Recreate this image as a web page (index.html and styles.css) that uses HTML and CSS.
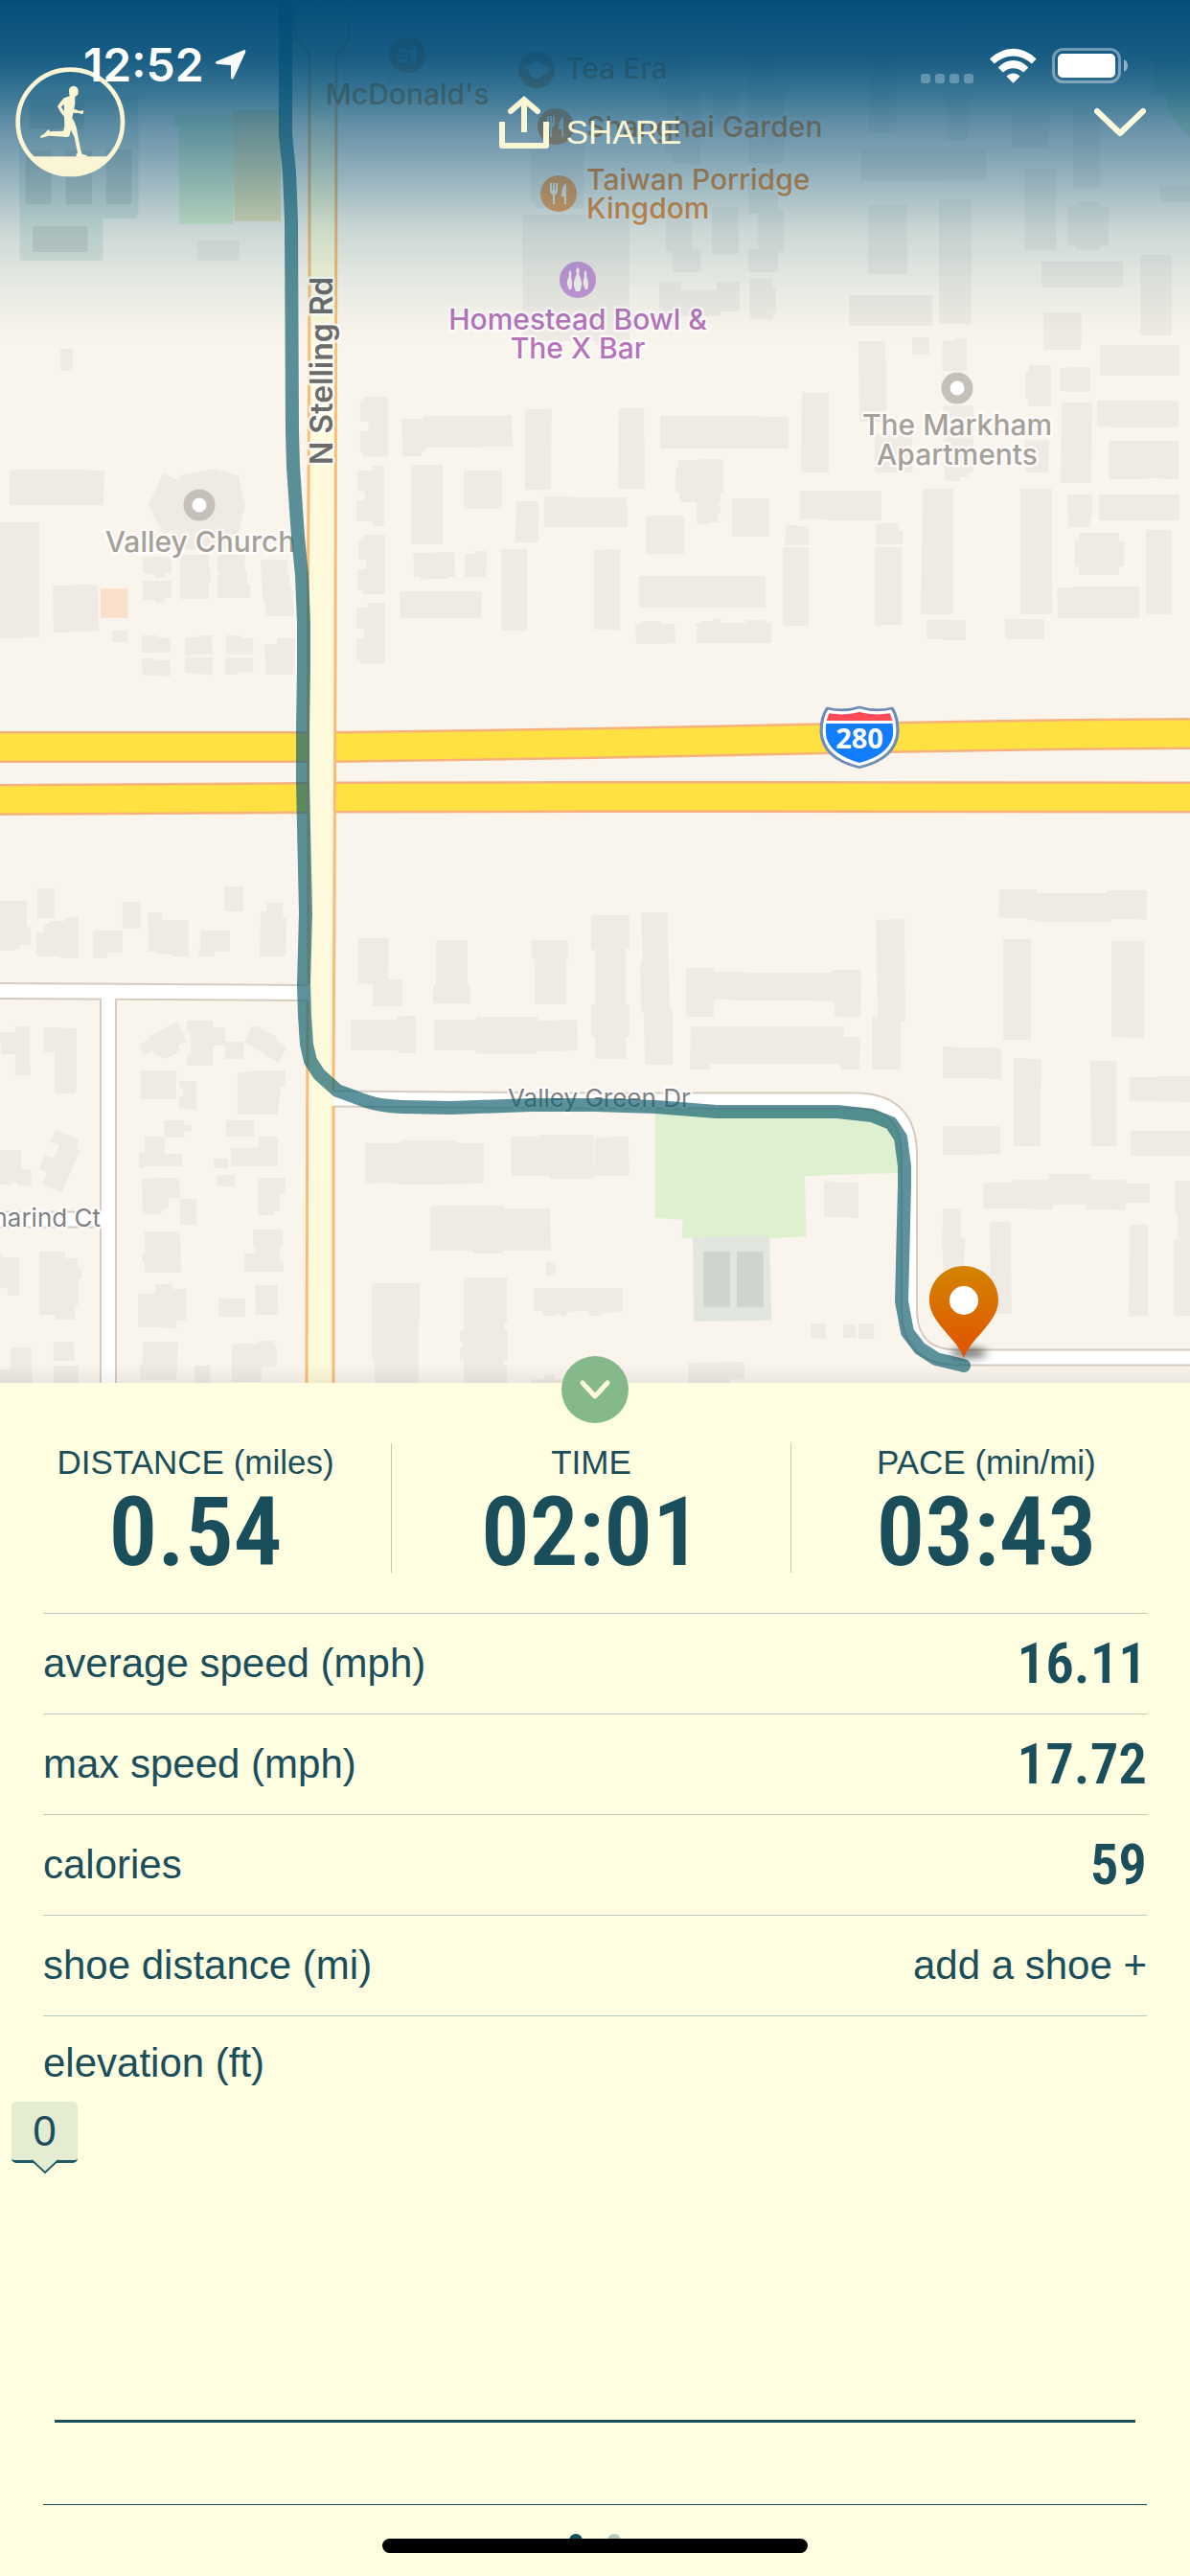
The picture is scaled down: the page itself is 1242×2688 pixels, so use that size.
FILE: index.html
```html
<!DOCTYPE html>
<html lang="en">
<head>
<meta charset="utf-8">
<meta name="viewport" content="width=device-width, initial-scale=1">
<title>Run summary</title>
<link rel="stylesheet" href="styles.css">
</head>
<body>
<main class="screen">
  <section class="map" aria-label="Route map">
    <svg class="map-canvas" viewBox="0 0 1242 1443" role="img" aria-label="Map of the run along N Stelling Rd and Valley Green Dr">
      <defs>
        <linearGradient id="pin-fill" x1="0" y1="0" x2="0" y2="1">
          <stop offset="0" stop-color="#d38400"/>
          <stop offset="1" stop-color="#e15200"/>
        </linearGradient>
        <filter id="soft" x="-50%" y="-100%" width="200%" height="300%"><feGaussianBlur stdDeviation="12"/></filter>
      </defs>

      <!-- parks and school grounds -->
      <svg width="621" height="360" viewBox="0 0 1568 1080" preserveAspectRatio="none">
        <path class="park" d="M460 362H615V702H472V395H460Z"/>
        <path class="sand" d="M612 345H740V692H618Z"/>
        <path class="school" d="M50 300H365V665L358 684H271V815H52Z"/>
        <path class="court" d="M67 470H135V640H67ZM173 470H243V640H173ZM280 468H347V640H280ZM77 322H221V405H77ZM86 708H231V789H86Z"/>
      </svg>
      <svg x="621" width="621" height="360" viewBox="0 0 1568 1080" preserveAspectRatio="none">
        <path class="park" d="M1472 180L1568 170V432L1509 350V292H1472Z"/>
      </svg>
      <svg x="621" y="1100" width="621" height="343" viewBox="0 0 1568 1029" preserveAspectRatio="none">
        <path class="park" d="M158 150V513L231 518L229 577H460L557 571L553 382L640 377L810 372V250L740 160Z"/>
        <path class="school" d="M258 572L460 570L465 833L260 837Z"/>
        <path class="court" d="M286 618H356V791H286ZM374 618H444V791H374Z"/>
      </svg>

      <!-- buildings, one tile per map quadrant -->
      <g class="building">
        <svg width="621" height="360" viewBox="0 0 1568 1080" preserveAspectRatio="none">
          <path d="M518 753H631V815H518ZM1397 430H1538V650H1410V636H1397ZM1377 672H1568V1068H1377ZM1018 225H1115V262H1018Z"/>
        </svg>
        <svg x="621" width="621" height="360" viewBox="0 0 1568 1080" preserveAspectRatio="none">
          <path d="M187 120H250V280H278V512H203V480H187ZM308 270H378V400H308ZM404 120H470V270H497V512H404ZM404 540H482V657H497V788H482V852H404V780H430V668H404ZM0 672H91V1080H0ZM187 625H255V765L258 780H279V852H203V788H187ZM308 648H375L379 652V795H308ZM702 465H1030V563H925V567H702ZM722 140H793V413H722ZM925 300H985V437H925ZM1098 340H1197V461H1098ZM1260 335H1331V588H1260ZM1490 582H1568V633H1490ZM1134 530H1215V783H1131V577H1134ZM1245 645H1268V633H1331V645H1353V770H1331V783H1268V770H1245ZM720 642H823V858H720ZM906 625H992V1014H906ZM669 924H889V1020H669ZM1177 819H1391V899H1177ZM1437 798H1520V1050H1437ZM1182 978H1283V1080H1182ZM169 882H227V908H321V882H381V975H331V990H169ZM407 873H467V897H477V980H470V1001H410V980H407ZM694 1068H765V1080H694ZM836 1056H881V1080H836ZM917 1066H947V1060H980V1080H917Z"/>
        </svg>
        <svg y="360" width="621" height="400" viewBox="0 0 1568 1200" preserveAspectRatio="none">
          <path d="M159 12H192V81H159ZM25 390H237V393H275L273 501H25ZM0 555H104V914H74V917H0ZM139 753H192V750H258L260 896H180V899H141ZM430 402L468 423L478 407L565 387L628 408L646 500L628 592V640H430L448 592L468 578L430 592L391 500ZM376 663H452V716H434V728H408V720L376 715ZM376 738H452V792H434V806H408V797H376ZM475 657H550V700L555 702V745H550V795H475ZM573 657H645V706H651V750H659V792H573V718L582 714L573 708ZM687 672H757V710L750 713L763 716V755L770 770L775 849H699V803L692 800ZM295 894H336V930H295ZM374 909H414L416 915L449 918V963H374ZM487 915H524V909H558L560 968H530V971H487ZM596 909H634L636 918H667V968H596ZM697 936H730V918H778L773 1031H700ZM374 981H411V987H449V1037L376 1034ZM487 978H560V1034L524 1029L487 1025ZM593 978H667V1025H629V1031H593Z"/>
          <path d="M959 162H1023V350H957V336H949V270H971V240H949V177H959ZM982 378H1013V567H983V552H939V486H962V458H942V393H982ZM957 594H1015V780H957V766H942V702H965V672H945V608H957ZM967 807H1015V998H949V987H939V918H959V888H939V822H967ZM1059 231H1114V222H1328V219H1348L1351 318H1268V321H1121V332H1111V348H1060ZM1384 201H1442V198H1454L1451 453H1384ZM1083 375H1167V624H1083ZM1222 393H1323V513H1222ZM1361 489H1419V618H1357ZM1434 474H1505V477H1568V570H1434ZM1089 651H1144V648H1197L1199 726H1180V732L1108 735V725H1091ZM1225 654H1252V645H1283V666L1280 726H1225ZM1321 639H1389V894H1321ZM1053 771H1270L1268 855H1055ZM1565 640H1568V893H1565Z"/>
          <path fill="#fae0cb" d="M265 762H337V855H265Z"/>
        </svg>
        <svg x="621" y="360" width="621" height="400" viewBox="0 0 1568 1200" preserveAspectRatio="none">
          <path d="M0 477H83V510H86V570H0ZM63 198H129V303H131V450H61ZM172 222H439V225H510V324H172ZM545 147H561V150H616V399H543ZM694 0H765V50H768V240H697ZM836 0H881V30H836ZM915 0H980V81H915ZM917 190H997V400L982 402V414H962V426H922ZM737 280H836V399H737ZM1131 297H1197L1194 399H1134ZM1182 0H1280V15H1182ZM1331 0H1540V96H1331ZM1144 63H1202V192H1141V168H1134V84H1144ZM1225 72H1245V69H1305V147H1240V143H1225ZM1323 174H1538V258H1356V255H1323ZM1353 300H1538V420L1475 417L1408 420H1353ZM1230 180H1310L1308 432H1227ZM220 360H278V357H338V462H331V490L323 492L331 508V530L323 532V555H298V560H268V491H222V462H212V387H220ZM361 480H460V600H361ZM134 534H235V654H134ZM540 456H755V549H607V545H540ZM503 564H525V567H563V627H500ZM740 558H800V582H811V624H740ZM495 633H563V879H495ZM737 633H808V876H757V879H737ZM864 450H944V843H858ZM1121 450H1204V843H1121ZM1245 468H1310V540H1305V570H1247V530H1245ZM1328 468H1540V549H1328ZM1275 588H1381V615H1394V693H1381V720H1275V693H1265V615H1275ZM1452 579H1520V843H1452ZM1217 759H1260V756H1434V855H1220ZM874 861H977V923H919V921H874ZM1081 858H1184V921H1081ZM0 642H28V639H66V893H38V890H0ZM116 723H449V822H116ZM106 873H121V864H172V873H210L212 933H192V936H109ZM265 870H280V864H313V855H333V870H396V861H449V870H465V933H268V882H265Z"/>
        </svg>
        <svg y="760" width="621" height="340" viewBox="0 0 1568 1020" preserveAspectRatio="none">
          <path d="M0 540H71V621H81V678H53V690H40V696H0ZM98 501H144V591L138 594H98ZM96 639H114V612H127V603H172V594L207 591V720H158V714H96ZM323 543H371V627H323ZM245 633H323V702H283V720H245ZM389 576H427V600H497V714H454V708L417 704V699H391V640ZM591 495H641V573H600V570H591ZM528 633H606V699H566V714H523V693H528ZM702 546H745V592L755 595L752 714H684L687 573H702ZM944 657H1025L1023 786H1060V870H982V801L944 798ZM1149 663H1232V804H1240V861H1141V804H1149ZM1401 663H1497V723H1492V864H1409V723H1401ZM1558 585H1568V693H1558ZM924 912H1045V903L1096 900V1017H1048V1008H924ZM1144 912H1255V903H1417V915H1470V912H1520L1523 1007L1470 1011H1414V1018H1253V1008H1144ZM1558 864H1568V965H1558ZM0 951H40V933H78V1020H3ZM116 936H167V939H202V1020H144V1014H116ZM366 990L393 972L391 965L468 918L491 980L470 992L475 1013L437 1034L431 1018L411 1024L401 1010L378 1022ZM492 915H561V936H593V981H643V1035H593V993H561V1055H492V1026H502V951H492ZM663 936L675 931L732 968L728 976L755 997L735 1047L645 981Z"/>
        </svg>
        <svg x="621" y="760" width="621" height="340" viewBox="0 180 1568 1020" preserveAspectRatio="none">
          <path d="M0 765H91V870H81V1042L91 1045V1146H81L83 1215H0ZM121 756H192V825L197 1059H205V1233H131L129 1075L121 1066L119 908H126ZM240 930H313V942H398V945H624L629 936H702V968L699 1086L631 1083V1034L391 1031L313 1028V1083H240ZM252 1113H656V1146H699V1248H646V1230H358V1227H303V1248H260L250 1245ZM740 780L816 777L818 1098H805V1248L730 1245V1083H745ZM1066 684H1164V693L1174 696H1348V687H1454V780L1424 777H1358V786H1189L1154 783L1134 774H1063ZM1076 840H1149V1155H1076ZM1361 846H1447V1149L1361 1146ZM917 1176H941V1179H1050V1182H1071V1278L1040 1275H927L917 1271ZM1103 1212H1131V1215H1177V1300H1174V1380H1103ZM1305 1221H1374V1380H1308V1230ZM1409 1272H1477V1269H1568V1350H1409Z"/>
        </svg>
        <svg y="1100" width="621" height="343" viewBox="0 0 1568 1029" preserveAspectRatio="none">
          <path d="M40 0H78L81 66H40ZM144 0H202V87L199 123H144ZM492 0H561V36H492ZM405 0H460L437 14ZM593 0H641V15H593ZM695 0H745L735 27ZM371 51H465V141H371ZM472 84H518V174H500L472 168V130H482V105H472ZM626 60L672 51H752V102H740L732 189H626ZM147 237L207 264L204 295L209 306L163 432L111 407L124 372L104 357L117 315L142 325L157 284L133 274ZM0 300H56V360L83 363V414L45 411V402H28V411L0 408ZM432 207H485V222H505V242H485V261H434V312H480V351H381V357H366V306H381V258H434ZM596 207H669V258H596ZM682 258H732V351H609V294H682ZM563 327H601V357H563ZM571 378H619V414H571ZM374 390L424 387H472L475 449H444V483L427 488V500H376ZM475 453H518V534H475ZM679 387H752V438H737V490L722 492V504H679ZM381 555H475L477 684H381V652L374 650V628H381ZM667 549H745V604H737V648H747V681H644V624H674V604H667ZM0 621L10 636H50V740L53 756H20V732H0ZM104 618H172V639H205V669H215V702H207V785H197V831H147V816H104ZM364 750H409V720H454V735H490V834H465V857H432V855H364ZM576 762L596 765H646V822H576ZM672 723H732V788L735 812L720 816H674ZM28 918H83V985L86 1029H0V987H28ZM141 900H194L197 960H141ZM141 975H207V1029H141ZM376 900H470L465 1020H369V972L376 970ZM513 975H553V1029H513ZM611 906H682V897H722L730 930V978H689V1026H611ZM962 279H1055V270H1204V279H1275V405L1055 408L1020 402L962 405ZM1346 258H1419V252H1565L1568 390H1447V381H1348ZM1134 477L1157 474H1326V483H1449L1452 615H1326V624H1247V615H1134ZM1439 651H1464V693H1439ZM980 717H1106V838H1103V1029H987V953H980ZM1222 699H1336V840H1328V864H1338V957H1328V975H1336V1029H1222V957H1212V918H1220V900H1212V864H1222ZM1406 732H1568V819H1552V804L1500 806L1488 822L1475 818V807L1460 819H1429V804H1406ZM1399 1018H1434V1003H1462V1018H1490V1029H1399Z"/>
        </svg>
        <svg x="621" y="1100" width="621" height="343" viewBox="0 0 1568 1029" preserveAspectRatio="none">
          <path d="M0 0H83V15H0ZM131 0H205V33H131ZM250 0H697V48H646V30H303V48H250ZM730 0H805V48H730ZM917 0H1071V78H1040V75H917ZM1103 12H1131V15H1177V100H1174V288H1103ZM1305 21H1374V288H1308ZM1409 72H1477V69H1568V150L1409 147ZM0 261L45 258H88L91 381H0ZM917 225H1068V312L992 315H917ZM1411 240H1568V318H1411ZM603 399H628V402H694V513H673V510H603ZM1023 402H1101V393H1197V375H1305V393H1399V405H1462V465H1399V489H1371V486H1295V471H1207V486H1142V483H1023ZM1528 396H1568V819H1525V580H1535V497H1528ZM917 483H965V576H975L972 690H919L914 585ZM1040 525H1096V618L1098 813H1043ZM1409 534H1457V819H1424V822H1406ZM0 732H73V807L15 810V819H0ZM568 843H606L609 890H568ZM654 846H687V888H654ZM694 843H735V891H694ZM245 966L394 963V1018H356V1029H245Z"/>
        </svg>
      </g>

      <!-- roads: casing first, then fill -->
      <g fill="none">
        <path class="hwy-edge" d="M0 779.500H321M349 779.500L621 775.500L897 770L1116 766.500L1242 765.500M0 834.500L321 832.500M349 832L621 831.500L1242 832"/>
        <path class="hwy" d="M0 779.500H321M349 779.500L621 775.500L897 770L1116 766.500L1242 765.500M0 834.500L321 832.500M349 832L621 831.500L1242 832"/>
        <path class="street-edge" d="M0 1034L322 1036M113 1035V1443M0 1272.500H113M347 1146.500L621 1148.500H890Q949 1147 949 1205V1370Q951 1416.500 1000 1416.500H1242"/>
        <path class="street" d="M0 1034L322 1036M113 1035V1443M0 1272.500H113M347 1146.500L621 1148.500H890Q949 1147 949 1205V1370Q951 1416.500 1000 1416.500H1242"/>
      </g>
      <path class="avenue" d="M308 0V40L323 57V300L321.500 620L320 1443H348L350 700L351 57L365 40V0Z"/>
      <path class="avenue-edge" d="M308 0V40L323 57V300L321.500 620L322 1027M321 1045L320 1443M348 1443L348 1154M348 1138L350 700L351 57L365 40V0M336 0V31"/>

      <!-- interstate shield -->
      <svg x="621" y="700" width="621" height="460" viewBox="0 0 1568 1380" preserveAspectRatio="none">
        <path fill="#fff" stroke="#6f8cb4" stroke-width="8" stroke-linejoin="round" d="M612 117Q655 130 697 114Q740 130 783 117Q798 145 798 190Q793 275 697 302Q600 275 596 190Q596 145 612 117Z"/>
        <path fill="#ff4a57" d="M617 133Q660 141 697 129Q735 141 777 133L784 156H610Z"/>
        <path fill="#127dff" d="M609 165H784Q787 190 784 210Q770 265 697 288Q622 262 610 210Q607 185 609 165Z"/>
      </svg>
      <text class="shield-text" x="897" y="781" text-anchor="middle">280</text>

      <!-- place markers -->
      <g class="food">
        <g transform="translate(425 57)"><circle r="19"/><path class="glyph" d="M-10 -2Q-9 -7 -4 -7T1 -2ZM-11 0H2V2H-11ZM-10 4H1Q1 8 -2 8H-8Q-10 8 -10 4ZM2 -5H11L9 8H4ZM6 -9H9V-5H7Z"/></g>
        <g transform="translate(560 73)"><circle r="19"/><path class="glyph" d="M-7 -6Q0 -10 7 -6L9 -2Q13 -5 13 0T7 4Q4 9 0 9T-7 5L-9 0L-13 -4H-9ZM-1 -11H1V-8H-1Z"/></g>
        <g transform="translate(580 132)"><circle r="19"/><path class="glyph" d="M-9 -11V-3Q-9 0 -6 1V11H-4V1Q-1 0 -1 -3V-11H-3V-4H-4V-11H-6V-4H-7V-11ZM8 -11Q3 -8 3 3H6V11H8Z"/></g>
        <g transform="translate(583 202)"><circle r="19"/><path class="glyph" d="M-9 -11V-3Q-9 0 -6 1V11H-4V1Q-1 0 -1 -3V-11H-3V-4H-4V-11H-6V-4H-7V-11ZM8 -11Q3 -8 3 3H6V11H8Z"/></g>
      </g>
      <g transform="translate(603 292)" fill="#c595d6">
        <circle r="19"/>
        <path class="glyph" d="M0 -13Q-3 -11 -1 -6Q-5 2 -4 6T-2 12H2Q3 10 4 6T1 -6Q3 -11 0 -13ZM-8 -10Q-10 -8 -9 -4Q-12 2 -11 5T-9 10H-7Q-6 9 -6 5T-7 -4Q-6 -8 -8 -10ZM8 -10Q6 -8 7 -4Q5 2 6 5T8 10H10Q11 9 11 5T9 -4Q10 -8 8 -10Z"/>
      </g>
      <g class="place-ring">
        <circle cx="208" cy="527" r="12"/>
        <circle cx="999" cy="405" r="12"/>
      </g>

      <!-- labels -->
      <g class="label food-label">
        <text x="425" y="109" text-anchor="middle">McDonald's</text>
        <text x="590" y="82">Tea Era</text>
        <text x="612" y="143">Shanghai Garden</text>
        <text x="612" y="198">Taiwan Porridge</text>
        <text x="612" y="228">Kingdom</text>
      </g>
      <g class="label fun-label" text-anchor="middle">
        <text x="603" y="344">Homestead Bowl &amp;</text>
        <text x="603" y="374">The X Bar</text>
      </g>
      <g class="label place-label" text-anchor="middle">
        <text x="209" y="576">Valley Church</text>
        <text x="999" y="454">The Markham</text>
        <text x="999" y="485">Apartments</text>
      </g>
      <g class="label street-label">
        <text x="530" y="1155">Valley Green Dr</text>
        <text x="105" y="1280" text-anchor="end">Tamarind Ct</text>
      </g>
      <text class="label avenue-label" transform="translate(347 485) rotate(-90)">N Stelling Rd</text>

      <path class="route" d="M298 0V140L302 180L304 230L305 450L306 487L311 560L315 600L317 650V697L316 760V817L319 953L317 1027L318 1060L320 1090L324 1107L333 1121L352 1138L382 1149Q396 1154 420 1155L471 1156L554 1153H621L684 1155L748 1160H874L910 1164L930 1172L940 1187L944 1217L944 1237L941 1358L947 1390L960 1407L977 1418L1006 1425"/>

      <svg x="621" y="1100" width="621" height="343" viewBox="0 0 1568 1029" preserveAspectRatio="none">
        <ellipse cx="985" cy="935" rx="48" ry="16" fill="#000" opacity=".55" filter="url(#soft)"/>
        <path fill="url(#pin-fill)" d="M972 951C955 890 881 840 881 770C881 710 922 663 972 663C1022 663 1063 710 1063 770C1063 840 989 890 972 951Z"/>
        <ellipse cx="972" cy="771" rx="38" ry="45" fill="#fff"/>
      </svg>
    </svg>
  </section>

  <header class="top">
    <div class="status-bar">
      <div class="status-left">
        <time>12:52</time>
        <svg width="33" height="32" viewBox="0 0 33 32" aria-hidden="true"><path fill="#fff" d="M31 0Q33 0 32 3L20 29Q18 32 17 29V16L3 15Q-1 14 2 12Z"/></svg>
      </div>
      <div class="status-right">
        <svg class="signal" width="56" height="10" viewBox="0 0 56 10" aria-hidden="true"><g fill="#fff" opacity=".28"><rect width="10" height="10" rx="3"/><rect x="15" width="10" height="10" rx="3"/><rect x="30" width="10" height="10" rx="3"/><rect x="45" width="10" height="10" rx="3"/></g></svg>
        <svg width="49" height="37" viewBox="1038 146 124 110" preserveAspectRatio="none" aria-hidden="true"><path fill="#fff" d="M1038 180Q1066 148 1100 148T1161 180L1149 195Q1126 171 1100 171T1050 195ZM1060 207Q1078 185 1100 185T1140 207L1127 222Q1115 209 1100 209T1073 222ZM1082 234Q1090 225 1100 225T1118 234L1100 255Z"/></svg>
        <svg width="80" height="37" viewBox="0 0 80 37" aria-hidden="true"><rect x="1.500" y="1.500" width="69" height="34" rx="10" fill="none" stroke="#fff" stroke-opacity=".4" stroke-width="3"/><rect x="6" y="6" width="60" height="25" rx="5" fill="#fff"/><path d="M75 12Q79 14 79 18.500T75 25Z" fill="#fff" fill-opacity=".5"/></svg>
      </div>
    </div>
    <nav class="actions">
      <button class="icon-button" type="button" aria-label="Activity">
        <svg width="130" height="125" viewBox="0 0 390 375" aria-hidden="true">
          <circle cx="190" cy="187" r="164" fill="none" stroke="#faf5d2" stroke-width="14"/>
          <path fill="#faf5d2" d="M64 295H316Q270 354 190 354T64 295Z"/>
          <path fill="#faf5d2" fill-rule="evenodd" d="M187 100Q182 75 200 74Q216 75 215 92Q215 104 206 106L205 112Q206 128 202 146L218 152L231 151Q234 158 228 163L216 159L199 158L196 175Q210 195 213 225L223 275L227 287L243 292L240 297H210L208 288L213 284L203 235L192 212L187 232Q180 236 170 233L124 230L98 237L96 232L111 222L120 211L126 213L124 217L168 215L172 200L171 170L160 157L150 138Q156 128 170 112L188 106ZM162 140L170 131L171 153Z"/>
        </svg>
      </button>
      <button class="share" type="button">
        <svg width="52" height="56" viewBox="0 0 52 56" fill="none" stroke="#faf5d2" stroke-width="6" aria-hidden="true"><path stroke-linejoin="round" d="M3 27V52H49V27"/><path stroke-linecap="round" d="M12 16L26 4L40 16"/><path d="M26 4V38"/></svg>
        <span>SHARE</span>
      </button>
      <button class="icon-button close" type="button" aria-label="Close">
        <svg width="54" height="32" viewBox="0 0 54 32" fill="none" stroke="#fffde0" stroke-width="6" stroke-linecap="round" stroke-linejoin="round" aria-hidden="true"><path d="M3 4L27 27L51 4"/></svg>
      </button>
    </nav>
  </header>

  <section class="panel">
    <button class="collapse" type="button" aria-label="Collapse details">
      <svg width="32" height="22" viewBox="0 0 32 22" fill="none" stroke="#fffde0" stroke-width="5" stroke-linecap="round" stroke-linejoin="round" aria-hidden="true"><path d="M3 4L16 18L29 4"/></svg>
    </button>

    <dl class="stats">
      <div class="stat"><dt>DISTANCE (miles)</dt><dd>0.54</dd></div>
      <div class="stat"><dt>TIME</dt><dd>02:01</dd></div>
      <div class="stat"><dt>PACE (min/mi)</dt><dd>03:43</dd></div>
    </dl>

    <dl class="rows">
      <div class="row"><dt>average speed (mph)</dt><dd>16.11</dd></div>
      <div class="row"><dt>max speed (mph)</dt><dd>17.72</dd></div>
      <div class="row"><dt>calories</dt><dd>59</dd></div>
      <div class="row"><dt>shoe distance (mi)</dt><dd class="action"><button class="add-shoe" type="button">add a shoe +</button></dd></div>
    </dl>

    <section class="elevation">
      <h2>elevation (ft)</h2>
      <div class="chart">
        <div class="tip">0
          <svg width="28" height="16" viewBox="0 0 28 16" aria-hidden="true"><path d="M0 0L14 13L28 0Z" fill="#e4ecd2"/><path d="M0 1L14 14L28 1" fill="none" stroke="#1f5c67" stroke-width="2"/></svg>
        </div>
        <div class="chart-line"></div>
      </div>
    </section>

    <div class="pager"><span class="dot current"></span><span class="dot"></span></div>
    <div class="home-bar"></div>
  </section>
</main>
</body>
</html>
```
FILE: styles.css
```css
* { box-sizing: border-box; }

body {
  margin: 0;
  background: #fffee1;
  color: #1b4e5b;
  font-family: "Liberation Sans", Arial, sans-serif;
}

dl, dd, h2 { margin: 0; font-weight: 400; }

button {
  padding: 0;
  border: 0;
  background: none;
  color: inherit;
  font: inherit;
  cursor: pointer;
}

svg { display: block; flex: none; }

.screen {
  position: relative;
  display: flex;
  flex-direction: column;
  min-height: 100vh;
}

/* map */
.map { position: relative; background: #f9f5ed; }
.map-canvas { width: 100%; height: auto; }

.map::after {
  content: "";
  position: absolute;
  inset: 0;
  pointer-events: none;
  background:
    linear-gradient(to top, rgba(60, 50, 40, .07), rgba(60, 50, 40, 0) 20px),
    linear-gradient(to bottom,
      rgba(0, 76, 120, .99) 0,
      rgba(0, 76, 120, .9) 60px,
      rgba(0, 80, 122, .76) 100px,
      rgba(0, 76, 120, .6) 130px,
      rgba(0, 76, 118, .49) 160px,
      rgba(0, 80, 116, .34) 200px,
      rgba(0, 86, 110, .19) 240px,
      rgba(0, 86, 100, .085) 290px,
      rgba(0, 86, 90, .015) 340px,
      rgba(0, 86, 90, 0) 360px);
}

.building { fill: #efebe4; }
.park { fill: #dff0d0; }
.sand { fill: #ebe3b6; }
.school { fill: #e1e7df; }
.court { fill: #cfd5cd; }

.hwy-edge { stroke: #f6b17c; stroke-width: 33px; }
.hwy { stroke: #ffe241; stroke-width: 28px; }
.street-edge { stroke: #d5cbc0; stroke-width: 18px; }
.street { stroke: #fff; stroke-width: 14px; }
.avenue { fill: #fcfada; }
.avenue-edge { fill: none; stroke: #f9bc78; stroke-width: 3px; }
.route {
  fill: none;
  stroke: rgba(21, 97, 111, .69);
  stroke-width: 14px;
  stroke-linecap: round;
  stroke-linejoin: round;
}

.food { fill: #f5a35c; }
.glyph { fill: #f9f5ed; }
.place-ring { fill: #fff; stroke: #c5c1ba; stroke-width: 9px; }

.label {
  font-family: Inter, "Liberation Sans", sans-serif;
  font-size: 30px;
  font-weight: 500;
  paint-order: stroke;
  stroke: rgba(255, 255, 255, .8);
  stroke-width: 5px;
  stroke-linejoin: round;
}
.food-label { fill: #ee8f3c; stroke: rgba(255, 255, 255, .4); }
.fun-label { fill: #b673b9; }
.place-label { fill: #a5a198; }
.street-label { font-size: 26px; font-weight: 400; fill: #808080; }
.avenue-label { font-size: 32px; font-weight: 600; fill: #6b6b6b; }
.shield-text { font: 700 29px "Open Sans", sans-serif; fill: #fff; }

/* header */
.top { position: absolute; inset: 0 0 auto; }

.status-bar {
  position: absolute;
  inset: 0 0 auto;
  display: flex;
  justify-content: space-between;
  align-items: center;
  height: 136px;
  padding: 0 64px 0 87px;
  color: #fff;
  font: 600 48px/48px Inter, sans-serif;
  pointer-events: none;
}
.status-left { display: flex; align-items: center; gap: 11px; }
.status-right { display: flex; align-items: center; gap: 16px; }
.signal { align-self: flex-end; }

.actions {
  display: grid;
  grid-template-columns: 1fr auto 1fr;
  align-items: center;
  padding: 65px 20px 0 10px;
}
.icon-button { justify-self: start; }
.close { justify-self: end; margin-right: 26px; }
.share {
  display: flex;
  align-items: center;
  gap: 18px;
  color: #faf5d2;
  font-size: 35px;
}
.share span { padding-top: 20px; }

/* details panel */
.panel {
  position: relative;
  flex: 1;
  display: flex;
  flex-direction: column;
  padding: 63px 45px 0;
  background: #fffee1;
}

.collapse {
  position: absolute;
  top: -28px;
  left: 50%;
  display: grid;
  place-items: center;
  width: 70px;
  height: 70px;
  border-radius: 50%;
  background: #85b98b;
  transform: translateX(-50%);
}

.stats {
  display: grid;
  grid-template-columns: 49fr 50fr 49fr;
  margin: 0 -36px 42px -45px;
}
.stat { height: 135px; text-align: center; }
.stat + .stat { border-left: 1px solid #b9c9bb; }
.stat dt { font-size: 35px; line-height: 40px; }
.stat dd,
.row dd {
  font-family: "Roboto Condensed", "Liberation Sans Narrow", Roboto, sans-serif;
  font-weight: 600;
}
.stat dd { font-size: 101px; line-height: 106px; }

.row {
  display: flex;
  justify-content: space-between;
  align-items: center;
  height: 105px;
  border-top: 1px solid #b9c9bb;
  font-size: 42px;
}
.row dd { font-size: 59px; line-height: 64px; }
.row .action { display: flex; }
.add-shoe {
  font: 400 42px/48px "Liberation Sans", Arial, sans-serif;
}

.elevation {
  border-top: 1px solid #b9c9bb;
  border-bottom: 1px solid #1b4e5b;
}
.elevation h2 { font-size: 42px; line-height: 90px; padding-top: 4px; }

.chart {
  position: relative;
  display: flex;
  align-items: flex-end;
  height: 415px;
  padding: 0 12px 85px;
}
.chart-line { flex: 1; height: 3px; background: #1b4e5b; }

.tip {
  position: absolute;
  top: -5px;
  left: -33px;
  width: 69px;
  height: 64px;
  border-bottom: 3px solid #1f5c67;
  border-radius: 5px;
  background: #e4ecd2;
  font-size: 44px;
  line-height: 62px;
  text-align: center;
}
.tip svg { position: absolute; top: 60px; left: 21px; }

.pager {
  display: flex;
  justify-content: center;
  gap: 26px;
  padding-top: 30px;
}
.dot { width: 14px; height: 14px; border-radius: 50%; background: #b3cabb; }
.current { background: #10505f; }

.home-bar {
  position: absolute;
  bottom: 24px;
  left: 50%;
  width: 444px;
  height: 15px;
  border-radius: 8px;
  background: #000;
  transform: translateX(-50%);
}
```
